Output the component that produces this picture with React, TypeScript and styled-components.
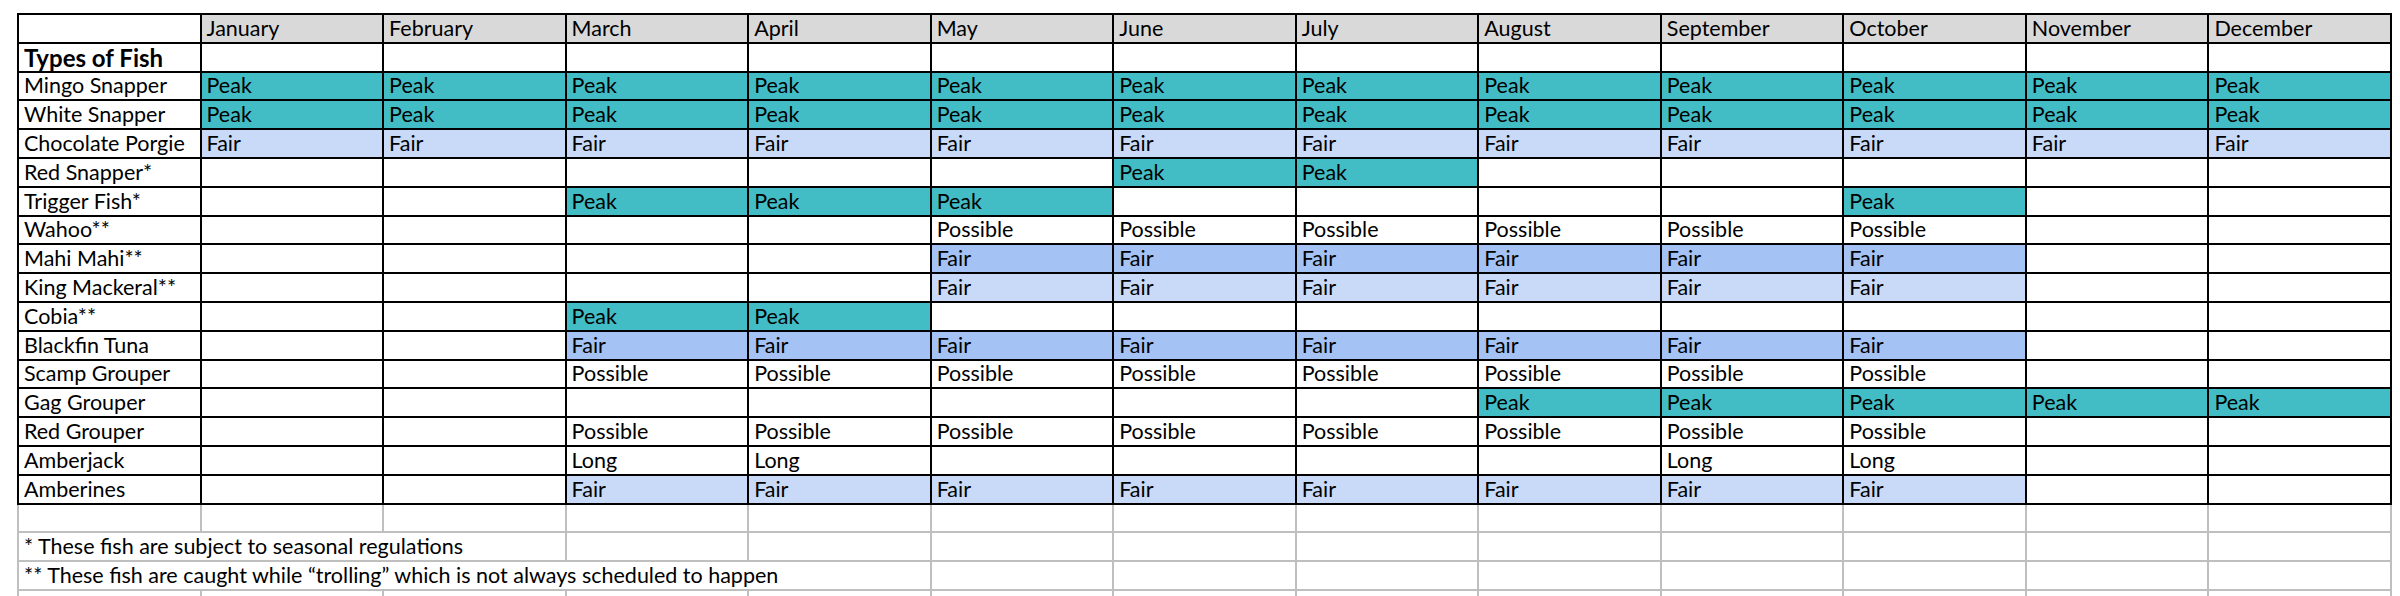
import React from 'react';
import styled, { createGlobalStyle } from 'styled-components';

const GlobalStyle = createGlobalStyle`
  html, body { margin: 0; padding: 0; background: #ffffff; }
  body { overflow: hidden; font-family: Lato, "Liberation Sans", sans-serif; }
`;

type Tone = 'peak' | 'fair' | 'deep' | 'plain' | 'head';

const toneBg: Record<Tone, string> = {
  peak: '#43bdc5',
  fair: '#c9daf8',
  deep: '#a4c2f4',
  plain: '#ffffff',
  head: '#d9d9d9',
};

const Page = styled.div`
  padding: 13px 0 0 17px;
`;

const Sheet = styled.table`
  border-collapse: collapse;
  table-layout: fixed;
  width: 2375px;
  font-family: Lato, "Liberation Sans", sans-serif;
  font-size: 21.5px;
  color: #000000;
`;

const Row = styled.tr`
  height: 28.8px;
`;

const Cell = styled.td<{ $tone: Tone; $bold?: boolean }>`
  padding: 0 5px 2px 5px;
  border: 2px solid #000000;
  background: ${(p) => toneBg[p.$tone]};
  vertical-align: bottom;
  white-space: nowrap;
  overflow: hidden;
  line-height: 23px;
  font-weight: ${(p) => (p.$bold ? 700 : 400)};
  font-size: ${(p) => (p.$bold ? '24px' : 'inherit')};
`;

const GridCell = styled.td`
  padding: 0 5px 2px 5px;
  border: 2px solid #bfbfbf;
  background: #ffffff;
  vertical-align: bottom;
  white-space: nowrap;
  overflow: visible;
  line-height: 23px;
`;

const MONTHS = [
  'January', 'February', 'March', 'April', 'May', 'June',
  'July', 'August', 'September', 'October', 'November', 'December',
];

type Entry = { text: string; tone: Tone } | null;
type FishRow = { name: string; bold?: boolean; cells: Entry[] };

const blank = (): Entry[] => Array.from({ length: 12 }, () => null);

const make = (name: string, spans: Array<[number, number, string, Tone]>, bold = false): FishRow => {
  const cells = blank();
  spans.forEach(([from, to, text, tone]) => {
    for (let i = from; i <= to; i++) cells[i] = { text, tone };
  });
  return { name, bold, cells };
};

const FISH: FishRow[] = [
  make('Types of Fish', [], true),
  make('Mingo Snapper', [[0, 11, 'Peak', 'peak']]),
  make('White Snapper', [[0, 11, 'Peak', 'peak']]),
  make('Chocolate Porgie', [[0, 11, 'Fair', 'fair']]),
  make('Red Snapper*', [[5, 6, 'Peak', 'peak']]),
  make('Trigger Fish*', [[2, 4, 'Peak', 'peak'], [9, 9, 'Peak', 'peak']]),
  make('Wahoo**', [[4, 9, 'Possible', 'plain']]),
  make('Mahi Mahi**', [[4, 9, 'Fair', 'deep']]),
  make('King Mackeral**', [[4, 9, 'Fair', 'fair']]),
  make('Cobia**', [[2, 3, 'Peak', 'peak']]),
  make('Blackfin Tuna', [[2, 9, 'Fair', 'deep']]),
  make('Scamp Grouper', [[2, 9, 'Possible', 'plain']]),
  make('Gag Grouper', [[7, 11, 'Peak', 'peak']]),
  make('Red Grouper', [[2, 9, 'Possible', 'plain']]),
  make('Amberjack', [[2, 3, 'Long', 'plain'], [8, 9, 'Long', 'plain']]),
  make('Amberines', [[2, 9, 'Fair', 'fair']]),
];

const NOTES: Array<{ text: string; span: number }> = [
  { text: '', span: 1 },
  { text: '* These fish are subject to seasonal regulations', span: 3 },
  { text: '** These fish are caught while \u201ctrolling\u201d which is not always scheduled to happen', span: 5 },
  { text: '', span: 1 },
  { text: '', span: 1 },
];

export default function App() {
  return (
    <Page>
      <GlobalStyle />
      <Sheet>
        <colgroup>
          {Array.from({ length: 13 }, (_, i) => (
            <col key={i} style={{ width: `${100 / 13}%` }} />
          ))}
        </colgroup>
        <tbody>
          <Row>
            <Cell $tone="plain" />
            {MONTHS.map((m) => (
              <Cell key={m} $tone="head">{m}</Cell>
            ))}
          </Row>
          {FISH.map((f) => (
            <Row key={f.name}>
              <Cell $tone="plain" $bold={f.bold}>{f.name}</Cell>
              {f.cells.map((c, i) => (
                <Cell key={i} $tone={c ? c.tone : 'plain'}>{c ? c.text : ''}</Cell>
              ))}
            </Row>
          ))}
          {NOTES.map((n, idx) => (
            <Row key={idx}>
              <GridCell colSpan={n.span}>{n.text}</GridCell>
              {Array.from({ length: 13 - n.span }, (_, i) => (
                <GridCell key={i} />
              ))}
            </Row>
          ))}
        </tbody>
      </Sheet>
    </Page>
  );
}
